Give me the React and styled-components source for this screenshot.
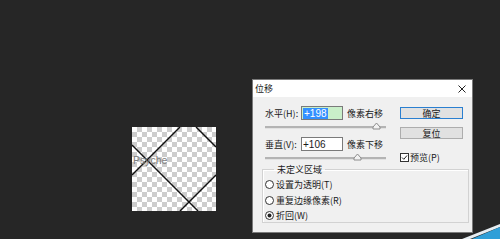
import React from 'react'
import styled, { createGlobalStyle } from 'styled-components'

const Global = createGlobalStyle`
  html, body {
    margin: 0;
    padding: 0;
    background: #262626;
  }
  body {
    width: 500px;
    height: 239px;
    overflow: hidden;
    font-family: "Noto Sans CJK SC", "Liberation Sans", sans-serif;
  }
`

const Stage = styled.div`
  position: relative;
  display: flex;
  align-items: flex-start;
  width: 500px;
  height: 239px;
  padding-left: 132px;
  box-sizing: border-box;
`

const Canvas = styled.div`
  position: relative;
  margin-top: 127px;
  width: 84px;
  height: 84px;
  overflow: hidden;
  background-color: #fff;
  background-image:
    linear-gradient(45deg, #cdcdcd 25%, transparent 25%, transparent 75%, #cdcdcd 75%),
    linear-gradient(45deg, #cdcdcd 25%, transparent 25%, transparent 75%, #cdcdcd 75%);
  background-size: 10px 10px;
  background-position: 0 0, 5px 5px;
  svg { display: block; }
`

const Watermark = styled.span`
  position: absolute;
  left: 1px;
  top: 27px;
  font-family: "Liberation Sans", sans-serif;
  font-size: 10.5px;
  color: #7e7e7e;
`

const Dialog = styled.div`
  margin-left: 36px;
  margin-top: 79px;
  width: 221px;
  height: 154px;
  box-sizing: border-box;
  border: 1px solid #7a7a7a;
  background: #f0f0f0;
  display: flex;
  flex-direction: column;
  font-size: 9px;
  color: #1a1a1a;
`

const TitleBar = styled.div`
  height: 17px;
  background: #fff;
  display: flex;
  align-items: center;
  justify-content: space-between;
  padding: 0 6px 0 2px;
  font-size: 9px;
`

const Body = styled.div`
  padding: 9px 4px 0 9px;
  display: flex;
  flex-direction: column;
`

const Top = styled.div`
  display: flex;
  padding-left: 3px;
`

const LeftCol = styled.div`
  display: flex;
  flex-direction: column;
  width: 120px;
`

const FieldRow = styled.div`
  display: flex;
  align-items: center;
  height: 14px;
`

const Label = styled.span`
  width: 36px;
  white-space: nowrap;
`

const Input = styled.div`
  width: 42px;
  height: 14px;
  box-sizing: border-box;
  border: 1px solid #7a7a7a;
  background: ${p => (p.$active ? '#c9efc9' : '#fff')};
  display: flex;
  align-items: center;
  padding-left: 1px;
  margin-right: 4px;
  font-family: "Liberation Sans", sans-serif;
  font-size: 10px;
`

const Selected = styled.span`
  background: #3390ff;
  color: #fff;
  padding: 0 1px;
  line-height: 11px;
`

const Unit = styled.span`
  white-space: nowrap;
`

const Slider = styled.div`
  position: relative;
  height: 17px;
  margin-right: -1px;
`

const Track = styled.div`
  position: absolute;
  left: 0;
  right: 0;
  top: 6px;
  height: 2px;
  background: #b4b4b4;
  border-bottom: 1px solid #e2e2e2;
`

const Thumb = styled.svg`
  position: absolute;
  top: 2px;
`

const RightCol = styled.div`
  display: flex;
  flex-direction: column;
  margin-left: 15px;
  padding-top: 1px;
`

const Button = styled.div`
  width: 63px;
  height: 12px;
  box-sizing: border-box;
  border: 1px solid ${p => (p.$primary ? '#2a7fd0' : '#adadad')};
  background: #e1e1e1;
  display: flex;
  align-items: center;
  justify-content: center;
  margin-bottom: 8px;
  font-size: 9px;
`

const CheckRow = styled.div`
  display: flex;
  align-items: center;
  margin-top: 4px;
  gap: 1px;
`

const Box = styled.svg`
  display: block;
`

const Group = styled.fieldset`
  margin: -5px 0 0 0;
  padding: 2px 0 0 2px;
  width: 207px;
  height: 60px;
  box-sizing: border-box;
  border: 1px solid #d2d2d2;
  box-shadow: inset 1px 1px 0 #fff;
  display: flex;
  flex-direction: column;
  gap: 2.5px;
`

const Legend = styled.legend`
  margin-left: 9px;
  padding: 0 3px;
  font-size: 9px;
`

const RadioRow = styled.div`
  display: flex;
  align-items: center;
  gap: 2px;
  height: 13px;
`

const Corner = styled.svg`
  position: absolute;
  right: 0;
  bottom: 0;
`

function SliderThumb({ x }) {
  return (
    <Thumb width="9" height="8" viewBox="0 0 9 8" style={{ left: x }}>
      <path d="M1 7 L1 5 L4.5 1 L8 5 L8 7 Z" fill="#f2f2f2" stroke="#8c8c8c" strokeWidth="1" />
    </Thumb>
  )
}

function Radio({ checked }) {
  return (
    <svg width="9" height="9" viewBox="0 0 9 9">
      <circle cx="4.5" cy="4.5" r="4" fill="#fff" stroke="#333" strokeWidth="1" />
      {checked && <circle cx="4.5" cy="4.5" r="2" fill="#222" />}
    </svg>
  )
}

export default function App() {
  return (
    <Stage>
      <Global />
      <Canvas>
        <svg width="84" height="84" viewBox="0 0 84 84">
          <g stroke="#111" strokeWidth="1.4" fill="none">
            <line x1="48" y1="0" x2="0" y2="48" />
            <line x1="0" y1="18" x2="66" y2="84" />
            <line x1="64" y1="0" x2="84" y2="20" />
            <line x1="84" y1="48" x2="48" y2="84" />
          </g>
        </svg>
        <Watermark>Psyche</Watermark>
      </Canvas>

      <Dialog>
        <TitleBar>
          <span>位移</span>
          <svg width="8" height="8" viewBox="0 0 8 8">
            <path d="M0.5 0.5 L7.5 7.5 M7.5 0.5 L0.5 7.5" stroke="#222" strokeWidth="1" />
          </svg>
        </TitleBar>
        <Body>
          <Top>
            <LeftCol>
              <FieldRow>
                <Label>水平(H):</Label>
                <Input $active><Selected>+198</Selected></Input>
                <Unit>像素右移</Unit>
              </FieldRow>
              <Slider>
                <Track />
                <SliderThumb x={107} />
              </Slider>
              <FieldRow>
                <Label>垂直(V):</Label>
                <Input>+106</Input>
                <Unit>像素下移</Unit>
              </FieldRow>
              <Slider>
                <Track />
                <SliderThumb x={88} />
              </Slider>
            </LeftCol>
            <RightCol>
              <Button $primary>确定</Button>
              <Button>复位</Button>
              <CheckRow>
                <Box width="9" height="9" viewBox="0 0 9 9">
                  <rect x="0.5" y="0.5" width="8" height="8" fill="#fff" stroke="#333" />
                  <path d="M2 4.5 L3.8 6.3 L7 2.5" stroke="#222" strokeWidth="1" fill="none" />
                </Box>
                <span>预览(P)</span>
              </CheckRow>
            </RightCol>
          </Top>
          <Group>
            <Legend>未定义区域</Legend>
            <RadioRow><Radio /><span>设置为透明(T)</span></RadioRow>
            <RadioRow><Radio /><span>重复边缘像素(R)</span></RadioRow>
            <RadioRow><Radio checked /><span>折回(W)</span></RadioRow>
          </Group>
        </Body>
      </Dialog>

      <Corner width="50" height="20" viewBox="0 0 50 20">
        <polygon points="12,20 50,5 50,8 20,20" fill="#e6edf2" />
        <polygon points="22,20 50,8 50,20" fill="#2f9fd8" />
      </Corner>
    </Stage>
  )
}
